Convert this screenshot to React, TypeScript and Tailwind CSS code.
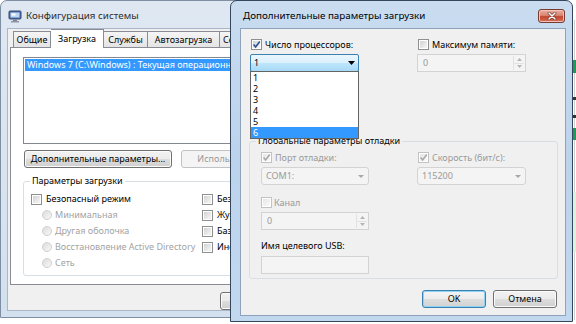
import React from "react";

function Check({ checked = false, disabled = false }: { checked?: boolean; disabled?: boolean }) {
  return (
    <div
      className={`relative w-[11px] h-[11px] shrink-0 border bg-white p-[1px] ${
        disabled ? "border-[#c2c2c2]" : "border-[#8e8f8f]"
      }`}
    >
      <div
        className={`w-full h-full ${
          disabled ? "bg-linear-to-br from-[#e6e6e6] to-[#f9f9f9]" : "bg-linear-to-br from-[#d2d2d2] to-[#f7f7f7]"
        }`}
      />
      {checked && (
        <svg className="absolute left-[-1px] top-[-1px]" width="11" height="11" viewBox="0 0 11 11">
          <path
            d="M2.6 5.4 L4.6 7.9 L8.8 2.4"
            fill="none"
            stroke={disabled ? "#a9a9a9" : "#2f4f8f"}
            strokeWidth="1.6"
          />
        </svg>
      )}
    </div>
  );
}

function Radio() {
  return <div className="w-[10px] h-[10px] shrink-0 rounded-full border border-[#d0d0d0] bg-linear-to-br from-[#dcdcdc] to-[#f8f8f8]" />;
}

function Spin() {
  return (
    <div className="flex flex-col w-[11px] h-full border-l border-[#e2e2e2]">
      <div className="flex-1 flex items-center justify-center border-b border-[#e2e2e2]">
        <svg width="5" height="3" viewBox="0 0 5 3">
          <path d="M0 3 L2.5 0 L5 3 Z" fill="#b5b5b5" />
        </svg>
      </div>
      <div className="flex-1 flex items-center justify-center">
        <svg width="5" height="3" viewBox="0 0 5 3">
          <path d="M0 0 L2.5 3 L5 0 Z" fill="#b5b5b5" />
        </svg>
      </div>
    </div>
  );
}

function DisabledSpinBox({ className }: { className: string }) {
  return (
    <div className={`h-[18px] flex border border-[#d3d3d3] bg-[#f4f4f4] ${className}`}>
      <div className="flex-1 pl-[5px] text-[9px] leading-[16px] text-[#9a9a9a]">0</div>
      <div className="py-[1px] pr-[1px] h-full">
        <Spin />
      </div>
    </div>
  );
}

function DisabledCombo({ value, className }: { value: string; className: string }) {
  return (
    <div className={`h-[18px] flex items-center rounded-[3px] border border-[#d3d3d3] bg-[#f4f4f4] ${className}`}>
      <div className="flex-1 pl-[4px] text-[9px] text-[#9a9a9a]">{value}</div>
      <svg className="mr-[4px]" width="6" height="3" viewBox="0 0 6 3">
        <path d="M0 0 H6 L3 3 Z" fill="#a8a8a8" />
      </svg>
    </div>
  );
}

function Btn({
  children,
  className,
  def = false,
  disabled = false,
}: {
  children: React.ReactNode;
  className: string;
  def?: boolean;
  disabled?: boolean;
}) {
  return (
    <div
      className={`h-[18px] shrink-0 rounded-[3px] border flex items-center justify-center text-[9px] whitespace-nowrap overflow-hidden ${
        disabled
          ? "border-[#bfc3c6] bg-[#f4f4f4] text-[#9a9a9a]"
          : def
          ? "border-[#3c7fb1] shadow-[inset_0_0_0_1px_#8fd3f5] bg-[linear-gradient(to_bottom,#f4f4f4_0%,#ececec_50%,#dedede_51%,#d2d2d2_100%)] text-black"
          : "border-[#707070] shadow-[inset_0_0_0_1px_#fbfbfb] bg-[linear-gradient(to_bottom,#f2f2f2_0%,#ebebeb_50%,#dddddd_51%,#cfcfcf_100%)] text-black"
      } ${className}`}
    >
      {children}
    </div>
  );
}

function MsIcon() {
  return (
    <svg width="14" height="13" viewBox="0 0 14 13">
      <rect x="1" y="1" width="12" height="8" rx="1" fill="#4f6fa8" stroke="#34466e" strokeWidth="1" />
      <rect x="2.5" y="2.5" width="9" height="5" fill="#bcd7f3" />
      <rect x="3.5" y="3.5" width="4" height="2" fill="#ffffff" />
      <rect x="5" y="9.5" width="4" height="1.5" fill="#7a8595" />
      <rect x="3" y="11" width="8" height="1.5" fill="#8d97a6" />
    </svg>
  );
}

function MainWindow() {
  return (
    <div className="absolute isolate z-0 left-0 top-0 w-[568px] h-[318px] rounded-t-[7px] border border-[#7f8fa3] bg-linear-to-b from-[#dfe8f2] to-[#d3e0ee] flex flex-col">
      <div className="h-[27px] shrink-0 flex items-center pl-[7px] gap-[4px] pt-[3px]">
        <MsIcon />
        <span className="text-[9.8px] text-[#2e2e2e] whitespace-nowrap">Конфигурация системы</span>
      </div>
      <div className="flex-1 ml-[6px] mr-[6px] mb-[7px] bg-[#f0f0f0] border border-[#a9b7c8] flex flex-col px-[2px]">
        {/* tabs */}
        <div className="h-[18px] shrink-0 flex items-end pl-[3px] text-[9px] relative z-10">
          <div className="w-[38px] h-[16px] border border-b-0 border-[#898c95] bg-linear-to-b from-[#f5f5f5] to-[#e4e4e4] flex items-center justify-center">
            Общие
          </div>
          <div className="w-[53px] h-[19px] -mb-px border border-b-0 border-l-0 border-[#898c95] bg-white flex items-start pt-[2px] justify-center">
            Загрузка
          </div>
          <div className="w-[44px] h-[16px] border border-b-0 border-l-0 border-[#898c95] bg-linear-to-b from-[#f5f5f5] to-[#e4e4e4] flex items-center justify-center">
            Службы
          </div>
          <div className="w-[72px] h-[16px] border border-b-0 border-l-0 border-[#898c95] bg-linear-to-b from-[#f5f5f5] to-[#e4e4e4] flex items-center justify-center">
            Автозагрузка
          </div>
          <div className="w-[50px] h-[16px] border border-b-0 border-l-0 border-[#898c95] bg-linear-to-b from-[#f5f5f5] to-[#e4e4e4] flex items-center pl-[3px]">
            Сервис
          </div>
        </div>
        {/* panel */}
        <div className="h-[238px] shrink-0 border border-[#898c95] bg-white flex flex-col pl-[12px] pr-[12px]">
          <div className="mt-[9px] h-[87px] shrink-0 border border-[#828790] bg-white p-[1px]">
            <div className="h-[12px] bg-[#3399ff] text-white text-[9px] leading-[12px] pl-[2px] whitespace-nowrap overflow-hidden">
              Windows 7 (C:\Windows) : Текущая операционная система; Операционная система по умолчанию
            </div>
          </div>
          <div className="mt-[6px] flex gap-[9px] pl-[1px]">
            <Btn className="w-[148px]">Дополнительные параметры...</Btn>
            <Btn className="w-[160px]" disabled>
              Использовать по умолчанию
            </Btn>
          </div>
          <div className="relative mt-[13px] h-[95px] shrink-0 rounded-[3px] border border-[#d5dfe5] pt-[9px] pl-[7px] grid grid-cols-[171px_1fr] text-[9px] whitespace-nowrap">
            <div className="absolute left-[6px] top-[-8px] bg-white px-[2px] leading-[14px]">Параметры загрузки</div>
            <div className="flex flex-col">
              <div className="h-[16px] flex items-center gap-[4px]">
                <Check />
                <span>Безопасный режим</span>
              </div>
              {["Минимальная", "Другая оболочка", "Восстановление Active Directory", "Сеть"].map((t) => (
                <div key={t} className="h-[16px] flex items-center gap-[3px] pl-[11px] text-[#a3a3a3]">
                  <Radio />
                  <span>{t}</span>
                </div>
              ))}
            </div>
            <div className="flex flex-col">
              {["Без GUI", "Журнал загрузки", "Базовое видео", "Информация об ОС"].map((t) => (
                <div key={t} className="h-[16px] flex items-center gap-[4px]">
                  <Check />
                  <span>{t}</span>
                </div>
              ))}
            </div>
          </div>
        </div>
        <div className="mt-[7px] flex pl-[210px] gap-[6px]">
          <Btn className="w-[75px]">ОК</Btn>
          <Btn className="w-[75px]">Отмена</Btn>
        </div>
      </div>
    </div>
  );
}

function Dialog() {
  return (
    <div className="absolute z-20 left-[230px] top-0 w-[343px] h-[322px] rounded-t-[7px] border border-[#34475c] bg-linear-to-b from-[#c9dcf0] via-[#bcd3ec] to-[#c2d8ef] flex flex-col">
      <div className="h-[27px] shrink-0 flex items-start">
        <span className="ml-[12px] mt-[8px] text-[9.8px] text-black leading-[14px] whitespace-nowrap">
          Дополнительные параметры загрузки
        </span>
        <div className="ml-auto mr-[7px] mt-[8px] w-[27px] h-[14px] rounded-[3px] border border-[#7a3a30] bg-[linear-gradient(to_bottom,#eab0a2_0%,#d98570_45%,#c4472f_55%,#d4705a_100%)] flex items-center justify-center shadow-[inset_0_0_0_1px_#f2c3b8]">
          <svg width="10" height="8" viewBox="0 0 10 8">
            <path d="M2 1 L8 7 M8 1 L2 7" stroke="#5a1e16" strokeWidth="2.6" strokeLinecap="round" />
            <path d="M2 1 L8 7 M8 1 L2 7" stroke="#ffffff" strokeWidth="1.6" strokeLinecap="round" />
          </svg>
        </div>
      </div>
      <div className="relative flex-1 ml-[9px] mr-[6px] mb-[5px] bg-[#f0f0f0] border border-[#8ea3bb] flex flex-col text-[9px] whitespace-nowrap">
        {/* row 1 */}
        <div className="mt-[10px] flex pl-[10px]">
          <div className="w-[167px] h-[11px] flex items-center gap-[3px]">
            <Check checked />
            <span>Число процессоров:</span>
          </div>
          <div className="h-[11px] flex items-center gap-[3px]">
            <Check />
            <span>Максимум памяти:</span>
          </div>
        </div>
        <div className="mt-[4px] flex pl-[9px]">
          <div className="w-[109px] h-[18px] rounded-[2px] border border-[#3c7fb1] bg-[linear-gradient(to_bottom,#eaf6fd_0%,#d9f0fc_50%,#bee6fd_51%,#a7d9f5_100%)] flex items-center">
            <span className="flex-1 pl-[3px]">1</span>
            <svg className="mr-[3px]" width="7" height="4" viewBox="0 0 7 4">
              <path d="M0 0 H7 L3.5 4 Z" fill="#000000" />
            </svg>
          </div>
          <DisabledSpinBox className="ml-[58px] w-[109px]" />
        </div>
        {/* group box */}
        <div className="relative mt-[69px] ml-[8px] w-[309px] h-[138px] rounded-[3px] border border-[#d5dfe5] shrink-0 flex flex-col pl-[11px]">
          <div className="absolute left-[6px] top-[-8px] bg-[#f0f0f0] px-[2px] leading-[14px]">Глобальные параметры отладки</div>
          <div className="mt-[10px] flex">
            <div className="w-[157px] h-[11px] flex items-center gap-[3px] text-[#9a9a9a]">
              <Check checked disabled />
              <span>Порт отладки:</span>
            </div>
            <div className="h-[11px] flex items-center gap-[3px] text-[#9a9a9a]">
              <Check checked disabled />
              <span>Скорость (бит/с):</span>
            </div>
          </div>
          <div className="mt-[4px] flex">
            <DisabledCombo value="COM1:" className="w-[108px]" />
            <DisabledCombo value="115200" className="ml-[48px] w-[109px]" />
          </div>
          <div className="mt-[12px] h-[11px] flex items-center gap-[2px] text-[#9a9a9a]">
            <Check disabled />
            <span>Канал</span>
          </div>
          <DisabledSpinBox className="mt-[4px] w-[108px]" />
          <div className="mt-[10px] leading-[12px]">Имя целевого USB:</div>
          <div className="mt-[4px] w-[108px] h-[18px] border border-[#d3d3d3] bg-[#f4f4f4]" />
        </div>
        <div className="mt-[11px] flex justify-end pr-[8px] gap-[7px]">
          <Btn className="w-[64px]" def>
            OK
          </Btn>
          <Btn className="w-[64px]">Отмена</Btn>
        </div>
        {/* dropdown list */}
        <div className="absolute left-[9px] top-[42px] w-[109px] border border-[#646464] bg-white flex flex-col">
          {["1", "2", "3", "4", "5", "6"].map((n) => (
            <div
              key={n}
              className={`h-[11px] leading-[11px] pl-[2px] ${n === "6" ? "bg-[#3399ff] text-white" : "text-black"}`}
            >
              {n}
            </div>
          ))}
        </div>
      </div>
    </div>
  );
}

export default function App() {
  return (
    <div className="relative w-[576px] h-[324px] overflow-hidden bg-white font-['Noto_Sans','Open_Sans',sans-serif] text-black">
      {/* desktop bits at right edge */}
      <div className="absolute left-[574px] top-[20px] w-px h-[300px] bg-[#cfcfcf]" />
      <div className="absolute left-[573px] top-[60px] w-[3px] h-[13px] bg-[#1f9a55]" />
      <div className="absolute left-[573px] top-[97px] w-[3px] h-[3px] bg-[#333333]" />
      <div className="absolute left-[573px] top-[115px] w-[3px] h-[3px] bg-[#333333]" />
      <div className="absolute left-[573px] top-[128px] w-[3px] h-[12px] bg-[#1f9a55]" />
      <div className="absolute left-[573px] top-[192px] w-[3px] h-[60px] bg-[#dcf2dc]" />
      <MainWindow />
      <Dialog />
    </div>
  );
}
